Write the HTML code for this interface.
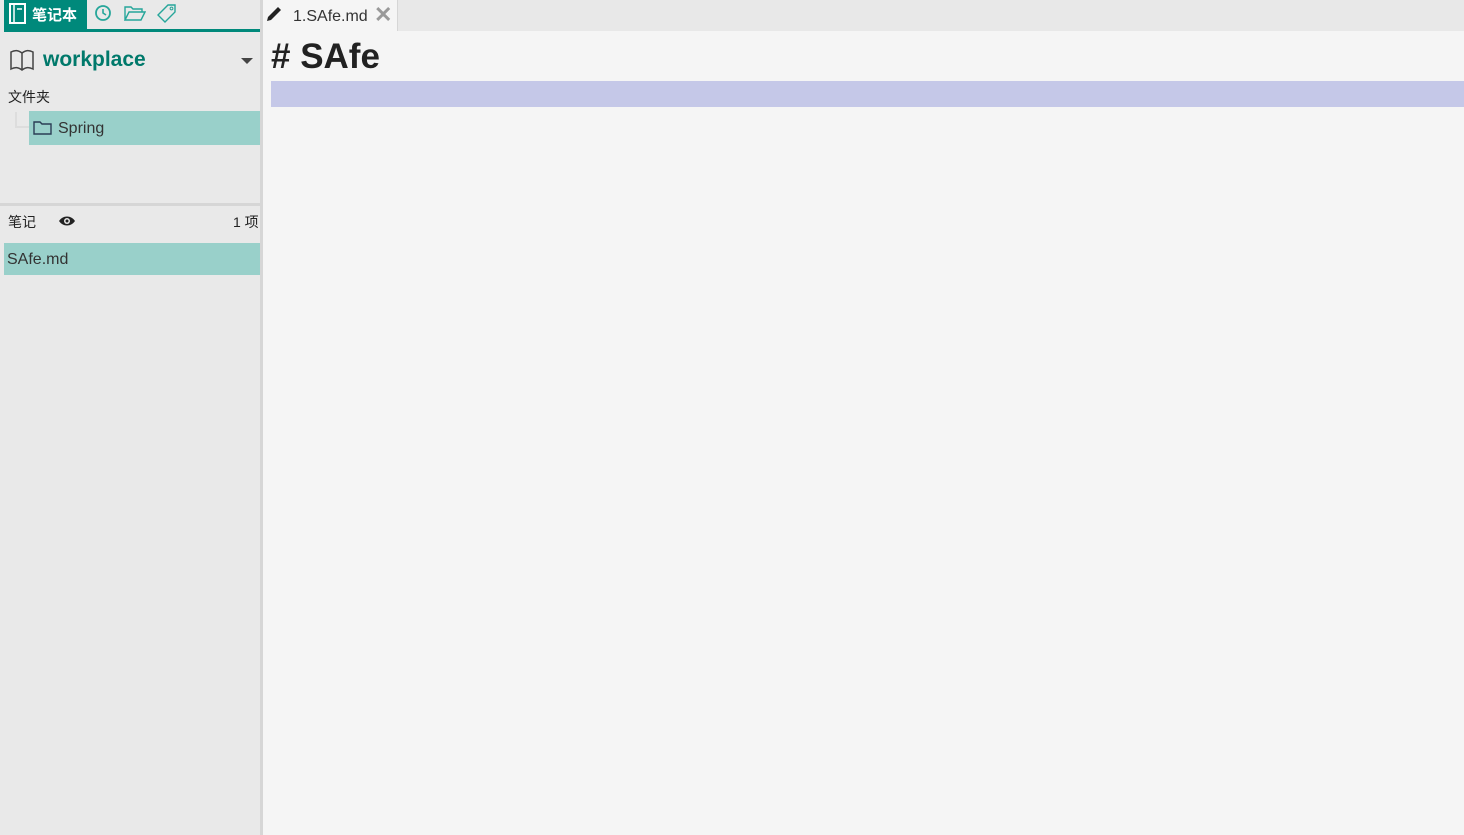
<!DOCTYPE html>
<html><head><meta charset="utf-8"><style>
*{margin:0;padding:0;box-sizing:border-box}
body{width:1464px;height:835px;overflow:hidden;background:#f5f5f5;font-family:"Liberation Sans","Noto Sans CJK SC",sans-serif;position:relative;color:#222}
.a{position:absolute}
</style></head><body>
<div class="a" style="left:0;top:0;width:260px;height:835px;background:#e9e9e9"></div>
<div class="a" style="left:260px;top:0;width:3px;height:835px;background:#d6d6d6"></div>
<div class="a" style="left:4px;top:0;width:83px;height:29px;background:#00897b"></div>
<div class="a" style="left:4px;top:29px;width:256px;height:3px;background:#00897b"></div>
<svg class="a" style="left:8px;top:3px" width="20" height="22" viewBox="0 0 20 22"><rect x="2" y="1" width="15" height="19" fill="none" stroke="#fff" stroke-width="2"/><line x1="6" y1="2" x2="6" y2="19" stroke="#fff" stroke-width="1.5"/><line x1="9" y1="6" x2="14" y2="6" stroke="#fff" stroke-width="1.5"/></svg>
<div class="a" style="left:32px;top:4px;color:#fff;font-size:15px;font-weight:bold">笔记本</div>
<svg class="a" style="left:94px;top:4px" width="18" height="18"><circle cx="9" cy="9" r="7" fill="none" stroke="#26a69a" stroke-width="1.8"/><path d="M9 5v4l3 2" fill="none" stroke="#26a69a" stroke-width="1.6"/></svg>
<svg class="a" style="left:124px;top:4px" width="22" height="18"><path d="M1 3h6l2 2h9v3H5L1 16zM1 16L5 8h16l-4 8z" fill="none" stroke="#26a69a" stroke-width="1.4"/></svg>
<svg class="a" style="left:156px;top:3px" width="22" height="20"><path d="M12 2h7v7L9 19 2 12z" fill="none" stroke="#26a69a" stroke-width="1.4"/><circle cx="15.5" cy="5.5" r="1.4" fill="none" stroke="#26a69a"/></svg>
<svg class="a" style="left:9px;top:48px" width="26" height="24"><path d="M2 4v17c4-2 7-2 11 1 4-3 7-3 11-1V4c-4-2-7-2-11 1C9 2 6 2 2 4zM13 5v17" fill="none" stroke="#444" stroke-width="1.5"/></svg>
<div class="a" style="left:43px;top:48px;color:#00796b;font-size:21px;font-weight:bold">workplace</div>
<div class="a" style="left:241px;top:58px;width:0;height:0;border-left:6px solid transparent;border-right:6px solid transparent;border-top:6px solid #444"></div>
<div class="a" style="left:8px;top:87px;font-size:14px">文件夹</div>
<div class="a" style="left:15px;top:112px;width:2px;height:16px;background:#ddd"></div>
<div class="a" style="left:15px;top:126px;width:14px;height:2px;background:#ddd"></div>
<div class="a" style="left:29px;top:111px;width:231px;height:34px;background:#99d0ca"></div>
<svg class="a" style="left:33px;top:120px" width="20" height="15"><path d="M1 2h6l2 2h9v10H1z" fill="none" stroke="#2b3d55" stroke-width="1.4"/></svg>
<div class="a" style="left:58px;top:120px;font-size:16px;color:#333">Spring</div>
<div class="a" style="left:0;top:203px;width:260px;height:3px;background:#d6d6d6"></div>
<div class="a" style="left:8px;top:212px;font-size:14px">笔记</div>
<svg class="a" style="left:58px;top:214px" width="18" height="14"><path d="M1 7c4-6 12-6 16 0-4 6-12 6-16 0z" fill="#222"/><circle cx="9" cy="7" r="3" fill="#e9e9e9"/><circle cx="9" cy="7" r="1.5" fill="#222"/></svg>
<div class="a" style="left:233px;top:212px;font-size:14px">1 项</div>
<div class="a" style="left:4px;top:243px;width:256px;height:32px;background:#99d0ca"></div>
<div class="a" style="left:7px;top:251px;font-size:16px;color:#333">SAfe.md</div>
<div class="a" style="left:263px;top:0;width:1201px;height:31px;background:#e8e8e8"></div>
<div class="a" style="left:263px;top:0;width:135px;height:31px;background:#f5f5f5;border-right:1px solid #d6d6d6"></div>
<svg class="a" style="left:265px;top:5px" width="18" height="18"><path d="M2 16l1-4L13 2l3 3L6 15z" fill="#222"/></svg>
<div class="a" style="left:293px;top:8px;font-size:16px;color:#333">1.SAfe.md</div>
<div class="a" style="left:374px;top:2px;font-size:22px;color:#999;font-weight:bold">✕</div>
<div class="a" style="left:271px;top:37px;font-size:35px;font-weight:bold;color:#222">#&nbsp;SAfe</div>
<div class="a" style="left:271px;top:81px;width:1193px;height:26px;background:#c5c8e8"></div>
</body></html>
